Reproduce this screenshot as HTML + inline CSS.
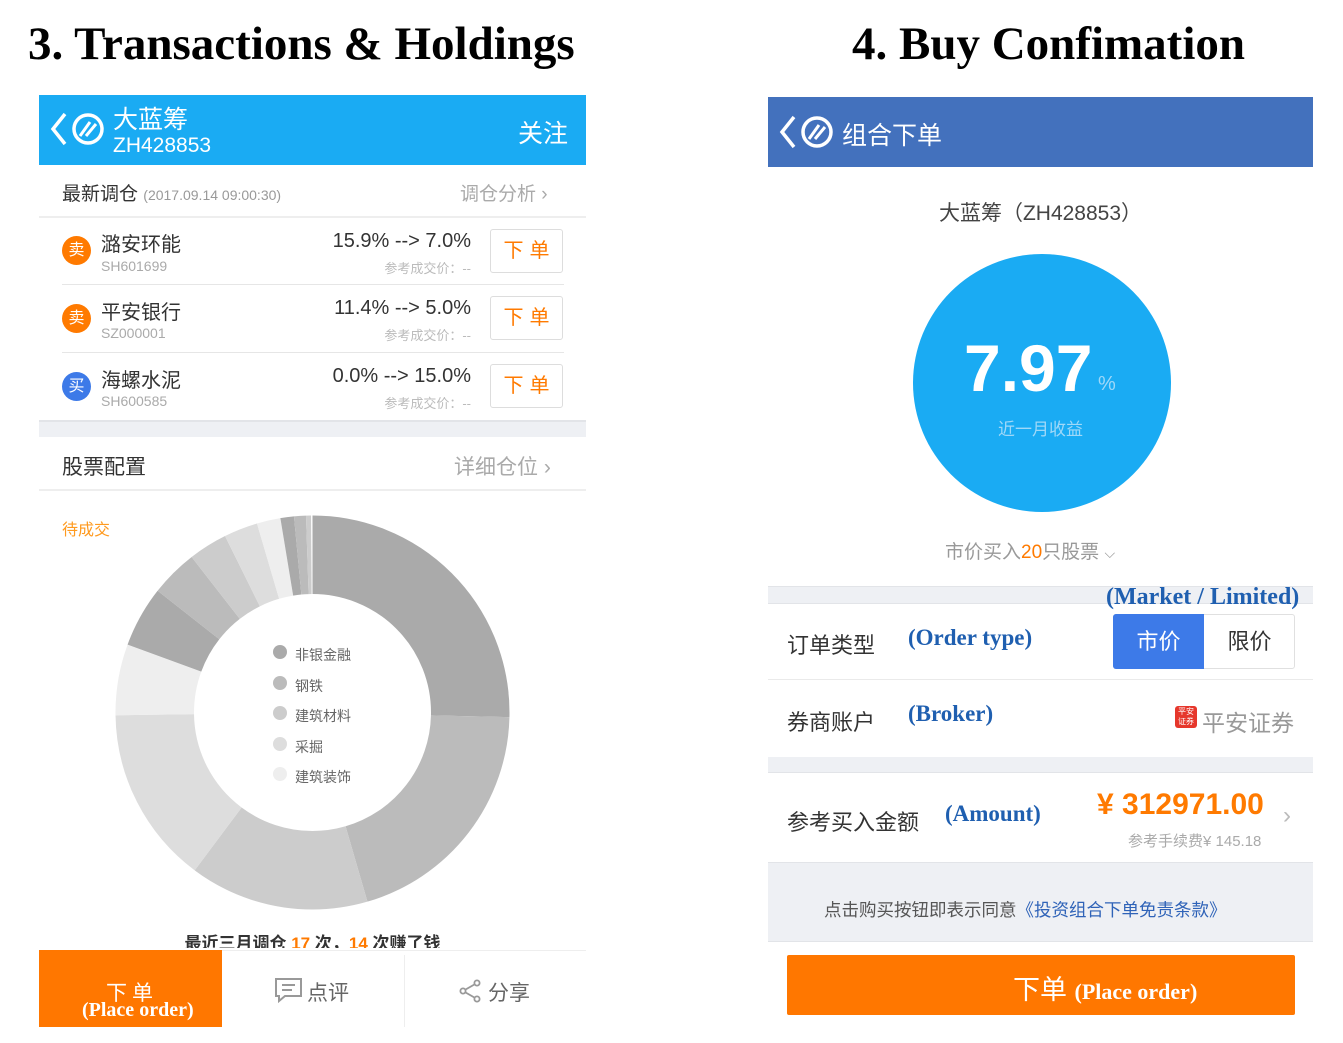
<!DOCTYPE html>
<html><head><meta charset="utf-8"><style>
*{margin:0;padding:0;box-sizing:border-box}
body{width:1343px;height:1043px;background:#fff;position:relative;overflow:hidden;font-family:"Liberation Sans","Noto Sans CJK SC",sans-serif;color:#333}
.a{position:absolute;white-space:nowrap}
.ser{font-family:"Liberation Serif","Noto Serif CJK SC",serif;font-weight:bold}
.blue{color:#1f5fb0}
.line{position:absolute;height:1px;background:#e6e6e6}
.btn{position:absolute;left:490px;width:73px;height:44px;border:1px solid #ddd;border-radius:3px;color:#ff7a00;font-size:20px;text-align:center;line-height:42px;letter-spacing:6px;padding-left:6px}
.badge{position:absolute;left:62px;width:29px;height:29px;border-radius:50%;color:#fff;font-size:16px;text-align:center;line-height:29px}
</style></head><body>

<div class="a ser" style="left:28px;top:17px;font-size:47px;color:#000">3. Transactions &amp; Holdings</div>
<div class="a ser" style="left:852px;top:17px;font-size:47px;color:#000">4. Buy Confimation</div>

<!-- LEFT PANEL -->
<div class="a" style="left:39px;top:95px;width:547px;height:70px;background:#1aabf3"></div>
<svg class="a" style="left:45px;top:108px" width="62" height="42" viewBox="0 0 62 42"><path d="M20 6 L8 21 L20 36" stroke="#fff" stroke-width="3.5" fill="none"/><circle cx="43" cy="21" r="14" stroke="#fff" stroke-width="3.5" fill="none"/><path d="M35 28 L45 14 M41 28 L51 16" stroke="#fff" stroke-width="3" fill="none"/></svg>
<div class="a" style="left:113px;top:100px;font-size:25px;color:#fff">大蓝筹</div>
<div class="a" style="left:113px;top:134px;font-size:21px;color:#fff">ZH428853</div>
<div class="a" style="left:518px;top:114px;font-size:25px;color:#fff">关注</div>

<div class="a" style="left:62px;top:179px;font-size:19px;color:#333">最新调仓 <span style="font-size:14px;color:#999">(2017.09.14 09:00:30)</span></div>
<div class="a" style="left:460px;top:179px;font-size:19px;color:#aaa">调仓分析 ›</div>
<div class="line" style="left:39px;top:216px;width:547px;height:2px;background:#eee"></div>

<div class="badge" style="top:236px;background:#ff7a00">卖</div>
<div class="a" style="left:101px;top:228px;font-size:20px;color:#333">潞安环能</div>
<div class="a" style="left:101px;top:258px;font-size:14px;color:#aaa">SH601699</div>
<div class="a" style="right:872px;top:230px;font-size:20px;color:#333">15.9% --&gt; 7.0%</div>
<div class="a" style="right:872px;top:258px;font-size:13px;color:#bbb">参考成交价：--</div>
<div class="btn" style="top:229px">下单</div>
<div class="line" style="left:62px;top:284px;width:502px"></div>

<div class="badge" style="top:304px;background:#ff7a00">卖</div>
<div class="a" style="left:101px;top:296px;font-size:20px;color:#333">平安银行</div>
<div class="a" style="left:101px;top:325px;font-size:14px;color:#aaa">SZ000001</div>
<div class="a" style="right:872px;top:297px;font-size:20px;color:#333">11.4% --&gt; 5.0%</div>
<div class="a" style="right:872px;top:325px;font-size:13px;color:#bbb">参考成交价：--</div>
<div class="btn" style="top:296px">下单</div>
<div class="line" style="left:62px;top:352px;width:502px"></div>

<div class="badge" style="top:372px;background:#3d7ae8">买</div>
<div class="a" style="left:101px;top:364px;font-size:20px;color:#333">海螺水泥</div>
<div class="a" style="left:101px;top:393px;font-size:14px;color:#aaa">SH600585</div>
<div class="a" style="right:872px;top:365px;font-size:20px;color:#333">0.0% --&gt; 15.0%</div>
<div class="a" style="right:872px;top:393px;font-size:13px;color:#bbb">参考成交价：--</div>
<div class="btn" style="top:364px">下单</div>

<div class="a" style="left:39px;top:420px;width:547px;height:17px;background:#eef0f4;border-top:2px solid #e2e4e8"></div>
<div class="a" style="left:62px;top:451px;font-size:21px;color:#333">股票配置</div>
<div class="a" style="left:454px;top:451px;font-size:21px;color:#aaa">详细仓位 ›</div>
<div class="line" style="left:39px;top:489px;width:547px;height:2px;background:#eee"></div>

<div class="a" style="left:62px;top:516px;font-size:16px;color:#ff9a1f">待成交</div>

<svg class="a" style="left:0;top:0" width="600" height="950" viewBox="0 0 600 950">
<g transform="rotate(-90 312.5 712.5)" fill="none" stroke-width="78.5">
<circle cx="312.5" cy="712.5" r="157.75" stroke="#aaaaaa" stroke-dasharray="251.5 1000" stroke-dashoffset="0"/>
<circle cx="312.5" cy="712.5" r="157.75" stroke="#bbbbbb" stroke-dasharray="199.3 1000" stroke-dashoffset="-251.5"/>
<circle cx="312.5" cy="712.5" r="157.75" stroke="#cccccc" stroke-dasharray="145.7 1000" stroke-dashoffset="-450.8"/>
<circle cx="312.5" cy="712.5" r="157.75" stroke="#dddddd" stroke-dasharray="144.3 1000" stroke-dashoffset="-596.5"/>
<circle cx="312.5" cy="712.5" r="157.75" stroke="#eeeeee" stroke-dasharray="57.7 1000" stroke-dashoffset="-740.8"/>
<circle cx="312.5" cy="712.5" r="157.75" stroke="#aaaaaa" stroke-dasharray="49.5 1000" stroke-dashoffset="-798.6"/>
<circle cx="312.5" cy="712.5" r="157.75" stroke="#bbbbbb" stroke-dasharray="38.5 1000" stroke-dashoffset="-848.1"/>
<circle cx="312.5" cy="712.5" r="157.75" stroke="#cccccc" stroke-dasharray="31.6 1000" stroke-dashoffset="-886.6"/>
<circle cx="312.5" cy="712.5" r="157.75" stroke="#dddddd" stroke-dasharray="27.5 1000" stroke-dashoffset="-918.2"/>
<circle cx="312.5" cy="712.5" r="157.75" stroke="#eeeeee" stroke-dasharray="19.2 1000" stroke-dashoffset="-945.7"/>
<circle cx="312.5" cy="712.5" r="157.75" stroke="#aaaaaa" stroke-dasharray="11 1000" stroke-dashoffset="-964.9"/>
<circle cx="312.5" cy="712.5" r="157.75" stroke="#bbbbbb" stroke-dasharray="9.6 1000" stroke-dashoffset="-975.9"/>
<circle cx="312.5" cy="712.5" r="157.75" stroke="#cccccc" stroke-dasharray="4.1 1000" stroke-dashoffset="-985.5"/>
</g>
<circle cx="280" cy="652" r="7" fill="#aaa"/><circle cx="280" cy="683" r="7" fill="#bbb"/><circle cx="280" cy="713" r="7" fill="#ccc"/><circle cx="280" cy="744" r="7" fill="#ddd"/><circle cx="280" cy="774" r="7" fill="#eee"/>
</svg>
<div class="a" style="left:295px;top:640px;font-size:14px;color:#666;line-height:30.5px">非银金融<br>钢铁<br>建筑材料<br>采掘<br>建筑装饰</div>

<div class="a" style="left:39px;top:930px;width:547px;height:18px;overflow:hidden"><div style="text-align:center;font-size:17px;color:#333;font-weight:bold;line-height:28px">最近三月调仓 <span style="color:#ff7a00">17</span> 次，<span style="color:#ff7a00">14</span> 次赚了钱</div></div>
<div class="line" style="left:222px;top:950px;width:364px;background:#eee"></div>
<div class="a" style="left:39px;top:950px;width:183px;height:77px;background:#ff7700"></div>
<div class="a" style="left:106px;top:977px;font-size:21px;color:#fff;letter-spacing:5px">下单</div>
<div class="a ser" style="left:82px;top:999px;font-size:20px;color:#fff">(Place order)</div>
<svg class="a" style="left:274px;top:977px" width="30" height="26" viewBox="0 0 30 26"><path d="M2 2 H27 V19 H11 L5 24 V19 H2 Z" stroke="#999" stroke-width="2" fill="none"/><path d="M8 8 H21 M8 13 H18" stroke="#999" stroke-width="2"/></svg>
<div class="a" style="left:307px;top:977px;font-size:21px;color:#666">点评</div>
<div class="a" style="left:404px;top:955px;width:1px;height:72px;background:#eee"></div>
<svg class="a" style="left:458px;top:979px" width="24" height="24" viewBox="0 0 24 24"><path d="M19 4 L5 12 L19 20" stroke="#999" stroke-width="1.8" fill="none"/><circle cx="19" cy="4" r="2.6" fill="#fff" stroke="#999" stroke-width="1.8"/><circle cx="5" cy="12" r="2.6" fill="#fff" stroke="#999" stroke-width="1.8"/><circle cx="19" cy="20" r="2.6" fill="#fff" stroke="#999" stroke-width="1.8"/></svg>
<div class="a" style="left:488px;top:977px;font-size:21px;color:#666">分享</div>

<!-- RIGHT PANEL -->
<div class="a" style="left:768px;top:97px;width:545px;height:70px;background:#4371bd"></div>
<svg class="a" style="left:774px;top:111px" width="62" height="42" viewBox="0 0 62 42"><path d="M20 6 L8 21 L20 36" stroke="#fff" stroke-width="3.5" fill="none"/><circle cx="43" cy="21" r="14" stroke="#fff" stroke-width="3.5" fill="none"/><path d="M35 28 L45 14 M41 28 L51 16" stroke="#fff" stroke-width="3" fill="none"/></svg>
<div class="a" style="left:842px;top:116px;font-size:25px;color:#fff">组合下单</div>

<div class="a" style="left:768px;top:197px;width:545px;text-align:center;font-size:21px;color:#444">大蓝筹（ZH428853）</div>
<div class="a" style="left:913px;top:254px;width:258px;height:258px;border-radius:50%;background:#1aabf3"></div>
<div class="a" style="left:964px;top:330px;font-size:66px;font-weight:bold;color:#fff">7.97</div>
<div class="a" style="left:1098px;top:373px;font-size:20px;color:#9fd8f8">%</div>
<div class="a" style="left:768px;top:415px;width:545px;text-align:center;font-size:17px;color:#9fd8f8">近一月收益</div>
<div class="a" style="left:945px;top:537px;font-size:19px;color:#999">市价买入<span style="color:#ff7a00">20</span>只股票 <span style="font-size:14px">⌵</span></div>

<div class="a" style="left:768px;top:586px;width:545px;height:18px;background:#eef0f4;border-top:1px solid #e2e4e8;border-bottom:1px solid #e2e4e8"></div>
<div class="a ser blue" style="left:1106px;top:584px;font-size:24px">(Market / Limited)</div>
<div class="a" style="left:787px;top:628px;font-size:22px;color:#333">订单类型</div>
<div class="a ser blue" style="left:908px;top:625px;font-size:23px">(Order type)</div>
<div class="a" style="left:1113px;top:614px;width:182px;height:55px;border:1px solid #e0e0e0;border-radius:3px"></div>
<div class="a" style="left:1113px;top:614px;width:91px;height:55px;background:#3d7ae8;border-radius:3px 0 0 3px;color:#fff;font-size:22px;text-align:center;line-height:55px">市价</div>
<div class="a" style="left:1204px;top:614px;width:91px;height:55px;color:#333;font-size:22px;text-align:center;line-height:55px">限价</div>
<div class="line" style="left:768px;top:679px;width:545px;background:#eaeaea"></div>
<div class="a" style="left:787px;top:705px;font-size:22px;color:#333">券商账户</div>
<div class="a ser blue" style="left:908px;top:701px;font-size:23px">(Broker)</div>
<div class="a" style="left:1175px;top:706px;width:22px;height:22px;background:#e6372c;border-radius:3px;color:#fff;font-size:8px;line-height:10px;text-align:center;padding-top:1px">平安<br>证券</div>
<div class="a" style="left:1202px;top:704px;font-size:23px;color:#999">平安证券</div>

<div class="a" style="left:768px;top:757px;width:545px;height:16px;background:#eef0f4;border-bottom:1px solid #e2e4e8"></div>
<div class="a" style="left:787px;top:805px;font-size:22px;color:#333">参考买入金额</div>
<div class="a ser blue" style="left:945px;top:801px;font-size:23px">(Amount)</div>
<div class="a" style="left:1097px;top:788px;font-size:30px;font-weight:bold;color:#ff7a00">¥ 312971.00</div>
<div class="a" style="left:1283px;top:802px;font-size:24px;color:#bbb">›</div>
<div class="a" style="left:1128px;top:830px;font-size:15px;color:#aaa">参考手续费¥ 145.18</div>

<div class="a" style="left:768px;top:862px;width:545px;height:80px;background:#eef0f4;border-top:1px solid #e2e4e8;border-bottom:1px solid #e2e4e8"></div>
<div class="a" style="left:824px;top:897px;font-size:17.5px;color:#555">点击购买按钮即表示同意<span style="color:#2f63b8">《投资组合下单免责条款》</span></div>

<div class="a" style="left:787px;top:955px;width:508px;height:60px;background:#ff7700;border-radius:2px"></div>
<div class="a" style="left:1013px;top:968px;font-size:27px;color:#fff">下单 <span class="ser" style="font-size:22px">(Place order)</span></div>
</body></html>
